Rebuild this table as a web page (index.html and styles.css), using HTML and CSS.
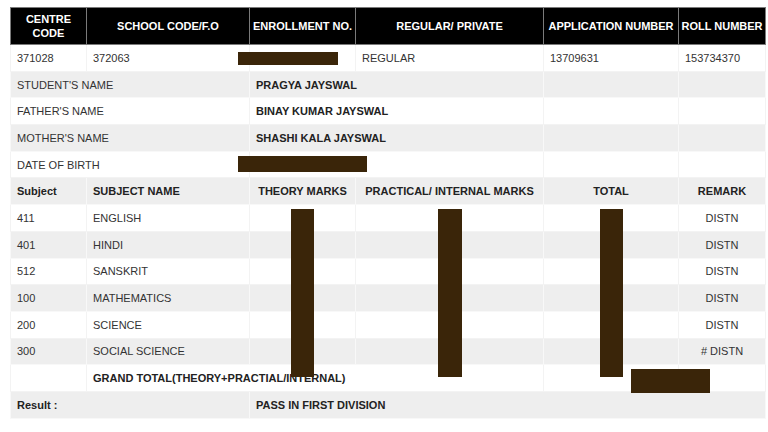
FILE: index.html
```html
<!DOCTYPE html>
<html>
<head>
<meta charset="utf-8">
<link rel="stylesheet" href="styles.css">
</head>
<body>
<div class="sheet">
  <table class="result">
    <colgroup>
      <col class="c1"><col class="c2"><col class="c3"><col class="c4"><col class="c5"><col class="c6">
    </colgroup>
    <thead>
      <tr>
        <th>CENTRE<br>CODE</th>
        <th>SCHOOL CODE/F.O</th>
        <th>ENROLLMENT NO.</th>
        <th>REGULAR/ PRIVATE</th>
        <th>APPLICATION NUMBER</th>
        <th>ROLL NUMBER</th>
      </tr>
    </thead>
    <tbody>
      <tr>
        <td>371028</td><td>372063</td><td></td><td>REGULAR</td><td>13709631</td><td>153734370</td>
      </tr>
      <tr>
        <td colspan="2">STUDENT'S NAME</td><td colspan="2" class="b">PRAGYA JAYSWAL</td><td></td><td></td>
      </tr>
      <tr>
        <td colspan="2">FATHER'S NAME</td><td colspan="2" class="b">BINAY KUMAR JAYSWAL</td><td></td><td></td>
      </tr>
      <tr>
        <td colspan="2">MOTHER'S NAME</td><td colspan="2" class="b">SHASHI KALA JAYSWAL</td><td></td><td></td>
      </tr>
      <tr>
        <td colspan="2">DATE OF BIRTH</td><td colspan="2"></td><td></td><td></td>
      </tr>
      <tr class="subhead">
        <td class="b">Subject</td><td class="b">SUBJECT NAME</td><td class="b ctr">THEORY MARKS</td><td class="b ctr">PRACTICAL/ INTERNAL MARKS</td><td class="b ctr">TOTAL</td><td class="b ctr">REMARK</td>
      </tr>
      <tr><td>411</td><td>ENGLISH</td><td></td><td></td><td></td><td class="ctr">DISTN</td></tr>
      <tr><td>401</td><td>HINDI</td><td></td><td></td><td></td><td class="ctr">DISTN</td></tr>
      <tr><td>512</td><td>SANSKRIT</td><td></td><td></td><td></td><td class="ctr">DISTN</td></tr>
      <tr><td>100</td><td>MATHEMATICS</td><td></td><td></td><td></td><td class="ctr">DISTN</td></tr>
      <tr><td>200</td><td>SCIENCE</td><td></td><td></td><td></td><td class="ctr">DISTN</td></tr>
      <tr><td>300</td><td>SOCIAL SCIENCE</td><td></td><td></td><td></td><td class="ctr"># DISTN</td></tr>
      <tr><td></td><td colspan="3" class="b">GRAND TOTAL(THEORY+PRACTIAL/INTERNAL)</td><td></td><td></td></tr>
      <tr><td colspan="2" class="b">Result :</td><td colspan="4" class="b">PASS IN FIRST DIVISION</td></tr>
    </tbody>
  </table>
  <div class="redact r-enroll"></div>
  <div class="redact r-dob"></div>
  <div class="redact r-theory"></div>
  <div class="redact r-prac"></div>
  <div class="redact r-total"></div>
  <div class="redact r-grand"></div>
</div>
</body>
</html>
```

FILE: styles.css
```css
html, body {
  margin: 0;
  padding: 0;
  background: #ffffff;
}
body {
  padding: 7px 0 0 10px;
  font-family: "Liberation Sans", Arial, sans-serif;
}
.sheet {
  position: relative;
  width: 755px;
}
.result {
  width: 755px;
  border-collapse: collapse;
  table-layout: fixed;
  font-size: 11px;
  color: #333333;
}
.c1 { width: 76px; }
.c2 { width: 163px; }
.c3 { width: 106px; }
.c4 { width: 188px; }
.c5 { width: 135px; }
.c6 { width: 87px; }

.result th {
  background: #000000;
  color: #ffffff;
  font-weight: bold;
  font-size: 11px;
  line-height: 14px;
  text-align: center;
  border: 1px solid #7a7a7a;
  height: 37px;
  padding: 0 2px;
  box-sizing: border-box;
}
.result td {
  height: 26.7px;
  padding: 0 6px;
  border: 1px solid #f3f3f3;
  box-sizing: border-box;
  vertical-align: middle;
  white-space: nowrap;
}
.result tbody tr:nth-child(odd) td {
  background: #ffffff;
}
.result tbody tr:nth-child(even) td {
  background: #eeeeee;
  border-color: #f8f8f8;
}
.b {
  font-weight: bold;
  color: #222222;
}
.ctr {
  text-align: center;
}
.redact {
  position: absolute;
  background: #3a2509;
}
.r-enroll { left: 228px; top: 45px; width: 100px; height: 13px; }
.r-dob { left: 228px; top: 149px; width: 129px; height: 16px; }
.r-theory { left: 281px; top: 202px; width: 23px; height: 168px; }
.r-prac { left: 428px; top: 202px; width: 24px; height: 168px; }
.r-total { left: 590px; top: 202px; width: 23px; height: 168px; }
.r-grand { left: 621px; top: 362px; width: 79px; height: 24px; }
```
